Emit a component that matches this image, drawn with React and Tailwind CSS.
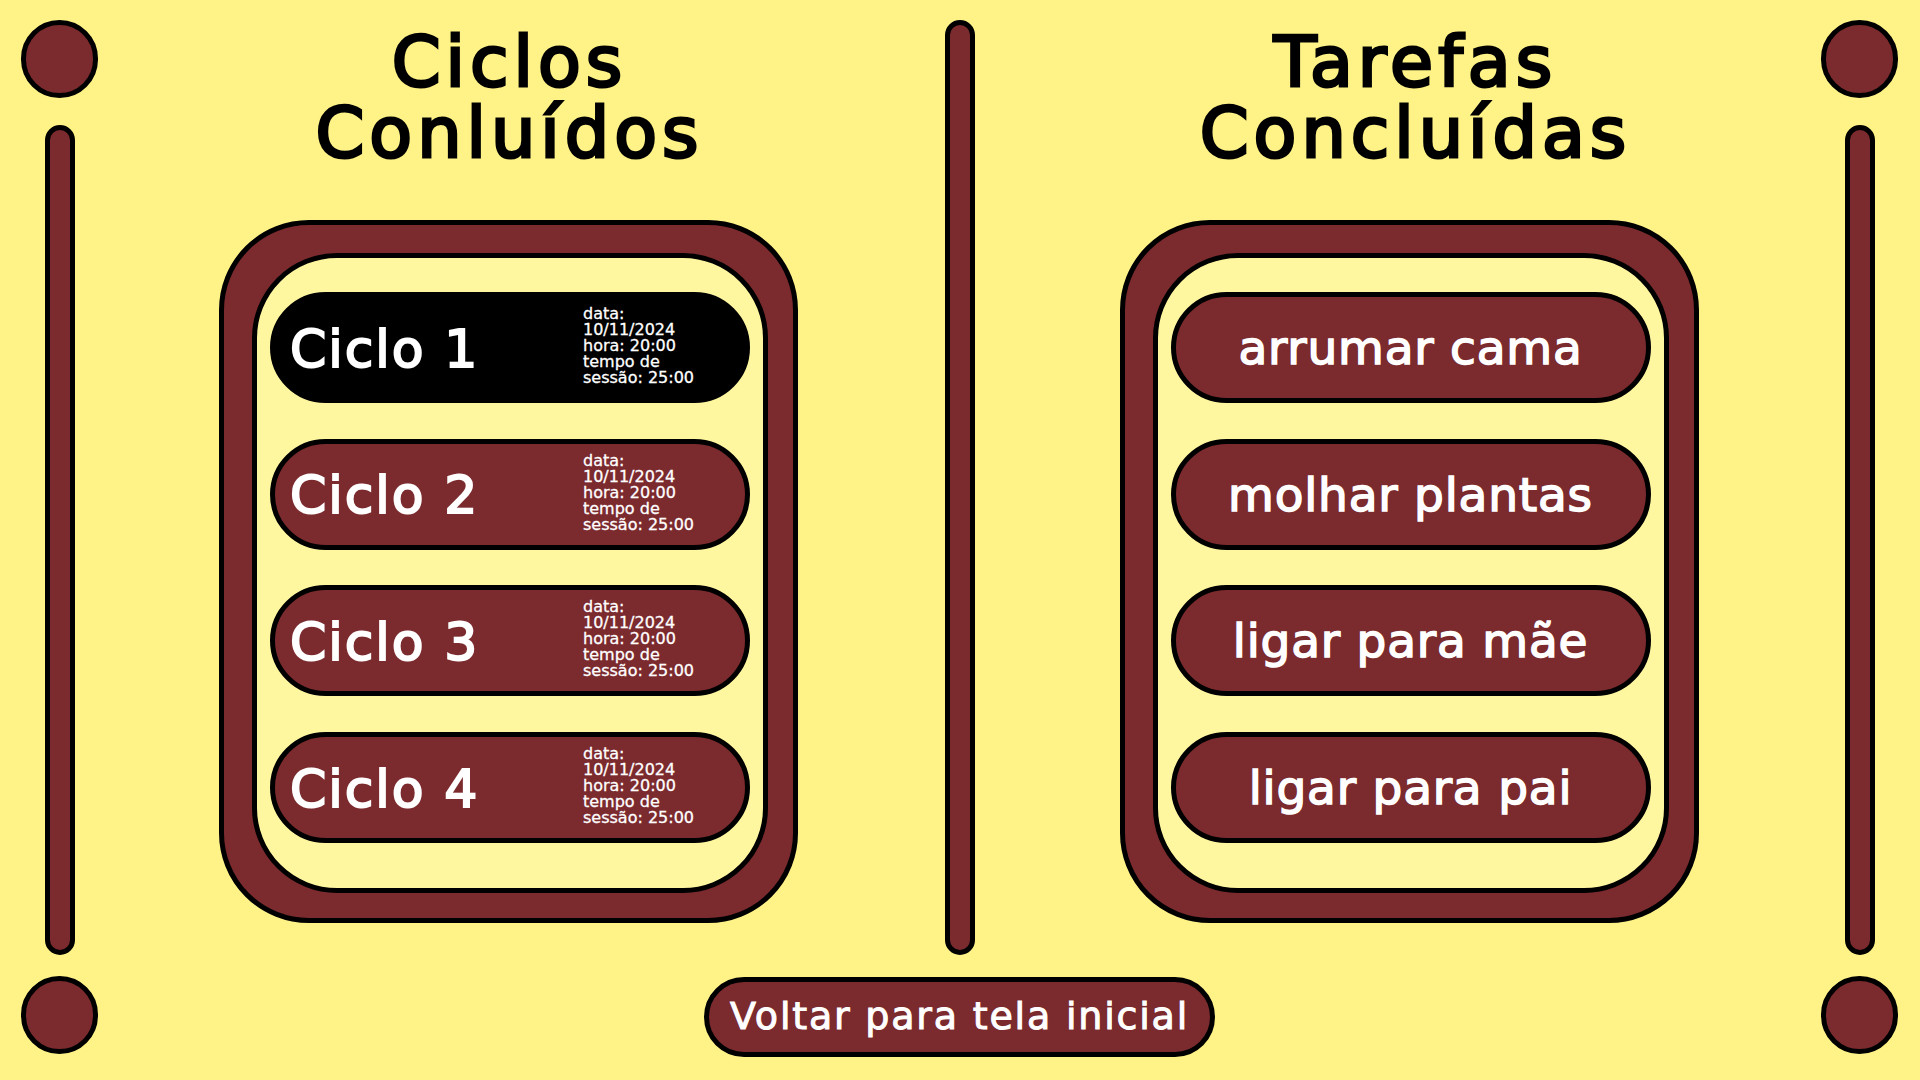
import React from 'react';

const ciclos = ['Ciclo 1', 'Ciclo 2', 'Ciclo 3', 'Ciclo 4'];
const tarefas = ['arrumar cama', 'molhar plantas', 'ligar para mãe', 'ligar para pai'];

function Rail() {
    return (
        <div className="w-[119px] shrink-0 flex flex-col items-center pt-[20px]">
            <div className="w-[77px] h-[78px] shrink-0 rounded-full border-[5px] border-black bg-[#7b2a2e]"></div>
            <div className="w-[30px] h-[830px] mt-[27px] shrink-0 rounded-full border-[5px] border-black bg-[#7b2a2e]"></div>
            <div className="w-[77px] h-[78px] mt-[21px] shrink-0 rounded-full border-[5px] border-black bg-[#7b2a2e]"></div>
        </div>
    );
}

function Painel({ titulo, direita, children }) {
    return (
        <section className="w-[579px] shrink-0">
            <h1 className={direita
                ? "h-[200px] pt-[7px] pl-[12px] text-center text-[70px] leading-[71px] tracking-[5px] font-normal whitespace-nowrap text-black [-webkit-text-stroke:3px_currentColor]"
                : "h-[200px] pt-[7px] pl-[2px] text-center text-[70px] leading-[71px] tracking-[5px] font-normal whitespace-nowrap text-black [-webkit-text-stroke:3px_currentColor]"}>
                {titulo[0]}
                <br />
                {titulo[1]}
            </h1>
            <div className="h-[703px] rounded-[90px] border-[5px] border-black bg-[#7b2a2e] pt-[28px] pl-[28px] pr-[25px]">
                <div className="h-[640px] rounded-[85px] border-[5px] border-black bg-[#fff7a0] pt-[34px] pl-[12.5px] pr-[13.5px] flex flex-col gap-[35.7px]">
                    {children}
                </div>
            </div>
        </section>
    );
}

function Ciclo({ nome, ativo }) {
    return (
        <div className={ativo
            ? "h-[111px] shrink-0 rounded-full border-[5px] border-black bg-black text-white flex items-center pl-[15.5px]"
            : "h-[111px] shrink-0 rounded-full border-[5px] border-black bg-[#7b2a2e] text-white flex items-center pl-[15.5px]"}>
            <span className="w-[293px] shrink-0 pt-[2px] text-[52px] leading-none tracking-[2px] [-webkit-text-stroke:2px_currentColor]">{nome}</span>
            <div className="pb-[3px] text-[16px] leading-[16px] whitespace-nowrap [-webkit-text-stroke:0.3px_currentColor]">
                <div>data:</div>
                <div>10/11/2024</div>
                <div>hora: 20:00</div>
                <div>tempo de</div>
                <div>sessão: 25:00</div>
            </div>
        </div>
    );
}

function Tarefa({ nome }) {
    return (
        <div className="h-[111px] shrink-0 rounded-full border-[5px] border-black bg-[#7b2a2e] text-white flex items-center justify-center text-[47px] leading-none tracking-[0.8px] whitespace-nowrap [-webkit-text-stroke:1.5px_currentColor]">
            {nome}
        </div>
    );
}

export default function App() {
    return (
        <div className="w-[1920px] h-[1080px] overflow-hidden flex bg-[#fff388] font-['DejaVu_Sans',sans-serif]">
            <Rail />
            <main className="w-[1681px] shrink-0 flex flex-col items-center pt-[20px]">
                <div className="w-full flex">
                    <div className="ml-[100px]">
                        <Painel titulo={['Ciclos', 'Conluídos']}>
                            {ciclos.map((c, i) => <Ciclo key={c} nome={c} ativo={i === 0} />)}
                        </Painel>
                    </div>
                    <div className="w-[30px] h-[935px] ml-[147px] mr-[145px] shrink-0 rounded-full border-[5px] border-black bg-[#7b2a2e]"></div>
                    <Painel titulo={['Tarefas', 'Concluídas']} direita>
                        {tarefas.map(t => <Tarefa key={t} nome={t} />)}
                    </Painel>
                </div>
                <button type="button" className="mt-[22px] w-[511px] h-[80px] pb-[3px] rounded-full border-[5px] border-black bg-[#7b2a2e] text-white text-[38px] leading-none tracking-[1.8px] whitespace-nowrap [-webkit-text-stroke:1px_currentColor]">
                    Voltar para tela inicial
                </button>
            </main>
            <Rail />
        </div>
    );
}
